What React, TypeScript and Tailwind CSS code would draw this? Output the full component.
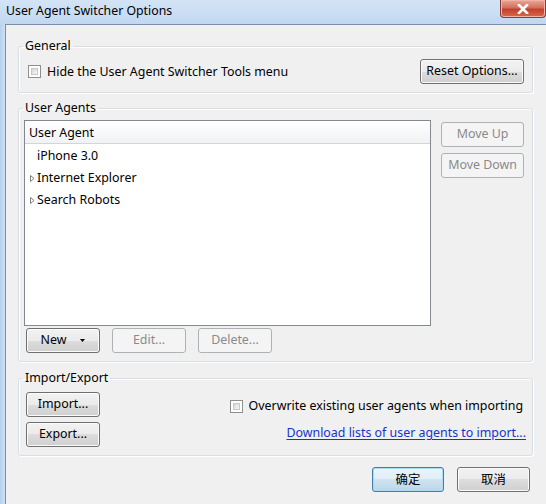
import type { ReactNode } from "react";

const btnBase =
  "h-[25px] rounded-[3px] border flex items-center justify-center leading-none";
const btnNormal =
  "border-[#707070] text-black bg-[linear-gradient(#f2f2f2_0%,#ebebeb_50%,#dddddd_50%,#cfcfcf_100%)] shadow-[inset_0_0_0_1px_#fbfbfb]";
const btnDisabled = "border-[#adb2b5] text-[#8a8a8a] bg-[#f4f4f4]";
const btnDefault =
  "border-[#3c7fb1] text-black bg-[linear-gradient(#eaf4fa_0%,#e0eef7_50%,#cfe3f0_50%,#bdd6e8_100%)] shadow-[inset_0_0_0_1px_#a8dcf5]";

const Button = ({
  children,
  className = "",
  disabled = false,
  primary = false,
}: {
  children: ReactNode;
  className?: string;
  disabled?: boolean;
  primary?: boolean;
}) => (
  <button
    className={`${btnBase} ${
      disabled ? btnDisabled : primary ? btnDefault : btnNormal
    } ${className}`}
  >
    {children}
  </button>
);

const Checkbox = () => (
  <span className="w-[13px] h-[13px] border border-[#8e8f8f] bg-white p-[2px] shrink-0 flex">
    <span className="flex-1 border border-[#c5c7ca] bg-[linear-gradient(135deg,#d4d6d9,#f7f7f7)]"></span>
  </span>
);

const Twisty = () => (
  <svg width="7" height="9" viewBox="0 0 7 9" className="shrink-0">
    <polygon points="1.5,1.5 5,4.5 1.5,7.5" fill="#fff" stroke="#808080" strokeWidth="1" />
  </svg>
);

const GroupBox = ({
  title,
  children,
  className = "",
}: {
  title: string;
  children: ReactNode;
  className?: string;
}) => (
  <fieldset
    className={`w-[515px] border border-[#d5dfe5] rounded-[3px] shadow-[inset_1px_1px_0_#fff,1px_1px_0_#fff] ${className}`}
  >
    <legend className="ml-[4px] px-[2px] leading-[16px] text-black">{title}</legend>
    {children}
  </fieldset>
);

// tree rows of the user agent list
const agents = [
  { name: "iPhone 3.0", folder: false },
  { name: "Internet Explorer", folder: true },
  { name: "Search Robots", folder: true },
];

export default function App() {
  return (
    <div className="w-[546px] h-[504px] overflow-hidden flex flex-col bg-[#c0d6ef] font-['Segoe_UI','Noto_Sans',sans-serif] text-[12.4px] text-black">
      {/* title bar */}
      <div className="h-[24px] flex items-start bg-[linear-gradient(#d3e4f6,#c2d8f0)] shrink-0">
        <span className="pl-[6px] pt-[3px] leading-[16px] text-[12.3px]">
          User Agent Switcher Options
        </span>
        <div className="ml-auto w-[46px] h-[18px] rounded-b-[4px] border border-t-0 border-[#8a3a34] bg-[linear-gradient(#e9a99a,#d3705d_45%,#c4402b_55%,#d56b4e)] flex items-center justify-center shadow-[inset_0_0_0_1px_#f0b3a6]">
          <svg width="12" height="10" viewBox="0 0 12 10">
            <path
              d="M2 1 L10 9 M10 1 L2 9"
              stroke="#fff"
              strokeWidth="2.6"
              strokeLinecap="square"
            />
          </svg>
        </div>
      </div>

      <div className="flex-1 flex">
        <div className="w-[5px] bg-[linear-gradient(90deg,#b6d0ec,#cfe0f3)] shrink-0"></div>
        <div className="flex-1 border-l border-t border-[#7b8da4] bg-[#f0f0f0] pl-[12px] pt-[13px]">
          {/* General */}
          <GroupBox title="General">
            <div className="flex items-center pl-[9px] pr-[8px] pt-[5px] pb-[8px]">
              <Checkbox />
              <span className="ml-[6px] leading-[16px]">
                Hide the User Agent Switcher Tools menu
              </span>
              <Button className="ml-auto w-[104px]">Reset Options...</Button>
            </div>
          </GroupBox>

          {/* User Agents */}
          <GroupBox title="User Agents" className="mt-[7px]">
            <div className="pl-[5px] pr-[8px] pt-[4px] pb-[8px]">
              <div className="flex">
                <div className="w-[407px] h-[206px] border border-[#828790] bg-white flex flex-col">
                  <div className="h-[23px] border-b border-[#d5d5d5] bg-[linear-gradient(#ffffff,#f1f2f4)] flex items-center pl-[4px] pt-[2px]">
                    User Agent
                  </div>
                  {agents.map((a) => (
                    <div key={a.name} className="h-[22px] flex items-center pl-[4px] pt-[3px]">
                      {a.folder ? <Twisty /> : <span className="w-[7px] shrink-0"></span>}
                      <span className="ml-[1px]">{a.name}</span>
                    </div>
                  ))}
                </div>
                <div className="ml-[10px] mt-[2px] flex flex-col gap-[6px]">
                  <Button disabled className="w-[83px]">
                    Move Up
                  </Button>
                  <Button disabled className="w-[83px]">
                    Move Down
                  </Button>
                </div>
              </div>
              <div className="mt-[2px] ml-[2px] flex gap-[12px]">
                <Button className="w-[74px]">
                  <span>New</span>
                  <svg width="5" height="3" viewBox="0 0 5 3" className="ml-[14px]">
                    <polygon points="0,0 5,0 2.5,3" fill="#000" />
                  </svg>
                </Button>
                <Button disabled className="w-[74px]">
                  Edit...
                </Button>
                <Button disabled className="w-[74px]">
                  Delete...
                </Button>
              </div>
            </div>
          </GroupBox>

          {/* Import/Export */}
          <GroupBox title="Import/Export" className="mt-[8px]">
            <div className="flex pl-[7px] pr-[6px] pt-[6px] pb-[8px]">
              <div className="flex flex-col gap-[5px]">
                <Button className="w-[74px]">Import...</Button>
                <Button className="w-[74px]">Export...</Button>
              </div>
              <div className="flex-1 flex flex-col items-end pt-[6px] gap-[11px]">
                <div className="flex items-center mr-[3px] h-[16px]">
                  <Checkbox />
                  <span className="ml-[6px] leading-[16px]">
                    Overwrite existing user agents when importing
                  </span>
                </div>
                <a
                  href="#"
                  className="leading-[16px] text-[#1733c9] underline underline-offset-[2px]"
                >
                  Download lists of user agents to import...
                </a>
              </div>
            </div>
          </GroupBox>

          {/* dialog buttons */}
          <div className="w-[516px] mt-[11px] flex justify-end gap-[13px] pr-[4px]">
            <Button primary className="w-[72px] font-['Noto_Sans_CJK_SC',sans-serif]">
              确定
            </Button>
            <Button className="w-[73px] font-['Noto_Sans_CJK_SC',sans-serif]">
              取消
            </Button>
          </div>
        </div>
      </div>
    </div>
  );
}
